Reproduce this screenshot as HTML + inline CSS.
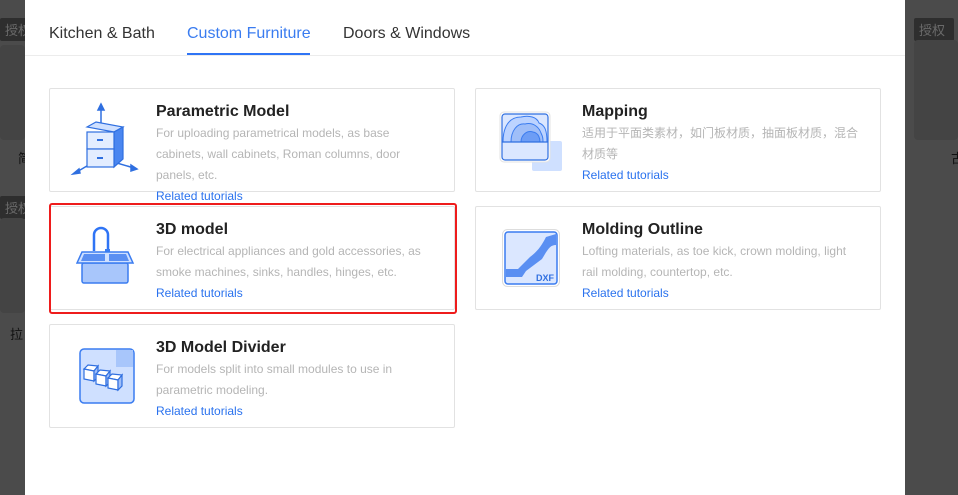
<!DOCTYPE html>
<html><head><meta charset="utf-8">
<style>
*{margin:0;padding:0;box-sizing:border-box}
body{width:958px;height:495px;overflow:hidden;background:#4b4b4b;font-family:"Liberation Sans","Noto Sans CJK SC",sans-serif;position:relative}
.badge{position:absolute;background:#2e2e2e;color:#6a6a6a;font-size:13px;padding:2px 5px;border-radius:2px}
.ph{position:absolute;background:#444;border-radius:4px}
.modal{position:absolute;left:25px;top:0;width:880px;height:495px;background:#fff}
.tabs{position:absolute;left:0;top:0;width:880px;height:56px;border-bottom:1px solid #ececec}
.tab{position:absolute;top:25px;font-size:16px;color:#333}
.tab.on{color:#3a7cf0}
.ul{position:absolute;left:162px;top:53px;width:123px;height:2px;background:#2f74f5}
.card{position:absolute;width:406px;height:104px;border:1px solid #e2e2e2;border-radius:2px;background:#fff}
.card h3{position:absolute;left:106px;top:14px;font-size:16px;font-weight:bold;color:#222}
.card p{position:absolute;left:106px;top:34px;width:272px;font-size:12px;line-height:21px;color:#b5b5b5}
.card a{position:absolute;left:106px;font-size:12px;color:#2a72ee;text-decoration:none}
.card svg{position:absolute}
.red{position:absolute;left:49px;top:203px;width:408px;height:111px;border:2px solid #ee1c1c;border-radius:3px}
</style></head><body>
<div class="badge" style="left:0;top:18px">授权</div>
<div class="ph" style="left:0;top:45px;width:25px;height:95px"></div>
<div style="position:absolute;left:18px;top:148px;font-size:13px;color:#111">简</div>
<div class="badge" style="left:0;top:196px">授权</div>
<div class="ph" style="left:0;top:218px;width:25px;height:95px"></div>
<div style="position:absolute;left:10px;top:324px;font-size:13px;color:#111">拉</div>
<div class="badge" style="left:914px;top:18px;width:40px">授权</div>
<div class="ph" style="left:914px;top:40px;width:44px;height:100px"></div>
<div style="position:absolute;left:951px;top:148px;font-size:13px;color:#111">古</div>

<div class="modal">
 <div class="tabs">
  <div class="tab" style="left:24px">Kitchen &amp; Bath</div>
  <div class="tab on" style="left:162px">Custom Furniture</div>
  <div class="tab" style="left:318px">Doors &amp; Windows</div>
  <div class="ul"></div>
 </div>
</div>

<div class="card" style="left:49px;top:88px">
 <svg style="left:20px;top:12px" width="70" height="80" viewBox="0 0 70 80">
  <g stroke="#2f6fe0" stroke-width="1.5" fill="none">
   <line x1="31" y1="24" x2="31" y2="6"/><polygon points="31,3 28,9 34,9" fill="#2f6fe0"/>
   <line x1="22" y1="62" x2="5" y2="72"/><polygon points="3,73 9,68 10,72" fill="#2f6fe0"/>
   <line x1="40" y1="60" x2="64" y2="67"/><polygon points="67,68 61,64 61,70" fill="#2f6fe0"/>
  </g>
  <polygon points="17,26 26,21 53,26 44,31" fill="#cfe0ff" stroke="#2f6fe0" stroke-width="1.2"/>
  <polygon points="44,31 53,26 53,58 44,66" fill="#4a86f0" stroke="#2f6fe0" stroke-width="1.2"/>
  <rect x="17" y="31" width="27" height="17" fill="#e3edff" stroke="#2f6fe0" stroke-width="1.2"/>
  <rect x="17" y="48" width="27" height="18" fill="#e3edff" stroke="#2f6fe0" stroke-width="1.2"/>
  <rect x="27" y="38" width="6" height="2" fill="#2f6fe0"/><rect x="27" y="56" width="6" height="2" fill="#2f6fe0"/>
 </svg>
 <h3>Parametric Model</h3>
 <p>For uploading parametrical models, as base cabinets, wall cabinets, Roman columns, door panels, etc.</p>
 <a style="top:100px">Related tutorials</a>
</div>

<div class="card" style="left:475px;top:88px">
 <svg style="left:23px;top:20px" width="65" height="62" viewBox="0 0 65 62">
  <rect x="33" y="32" width="30" height="30" rx="2" fill="#cfe0ff"/>
  <rect x="1" y="3" width="50" height="50" rx="4" fill="#fff" stroke="#e3e3e3"/>
  <rect x="3" y="5" width="46" height="46" rx="3" fill="#dbe7ff" stroke="#2f6fe0" stroke-width="1.2"/>
  <path d="M4 33 C4 18 10 8 22 8 C30 6 38 8 40 14 C46 16 48 22 48 33 Z" fill="#bcd3ff" stroke="#3a7cf0"/>
  <path d="M12 33 C12 22 18 14 26 15 C34 13 40 18 42 24 C44 28 44 30 44 33 Z" fill="#9fbef8" stroke="#3a7cf0"/>
  <path d="M22 33 C22 26 28 21 34 23 C40 24 41 30 41 33 Z" fill="#6d9df5" stroke="#3a7cf0"/>
  <line x1="3" y1="33" x2="49" y2="33" stroke="#2f6fe0" stroke-width="1.2"/>
 </svg>
 <h3>Mapping</h3>
 <p style="width:280px">适用于平面类素材，如门板材质，抽面板材质，混合材质等</p>
 <a style="top:79px">Related tutorials</a>
</div>

<div class="card" style="left:49px;top:206px">
 <svg style="left:26px;top:14px" width="62" height="70" viewBox="0 0 62 70">
  <path d="M18 30 V14 A7 7 0 0 1 32 14 V30" fill="none" stroke="#2f74f5" stroke-width="2.5"/>
  <rect x="29" y="28" width="5" height="7" fill="#3a7cf0"/>
  <rect x="6" y="42" width="46" height="20" rx="2" fill="#a8c6fb" stroke="#3a7cf0" stroke-width="1.5"/>
  <polygon points="1,42 6,31 52,31 57,42" fill="#cfe0ff" stroke="#3a7cf0" stroke-width="1.5"/>
  <polygon points="5,40 8,33 29,33 29,40" fill="#5a8ff2"/><polygon points="33,40 33,33 50,33 53,40" fill="#5a8ff2"/>
 </svg>
 <h3>3D model</h3>
 <p>For electrical appliances and gold accessories, as smoke machines, sinks, handles, hinges, etc.</p>
 <a style="top:79px">Related tutorials</a>
</div>

<div class="card" style="left:475px;top:206px">
 <svg style="left:26px;top:22px" width="58" height="58" viewBox="0 0 58 58">
  <rect x="0.5" y="0.5" width="57" height="57" rx="5" fill="#fff" stroke="#ddd"/>
  <rect x="3" y="3" width="52" height="52" rx="3" fill="#dbe7ff" stroke="#3a7cf0" stroke-width="1.5"/>
  <path d="M4 40 L16 40 L28 28 C36 22 40 16 44 8 L54 5 L54 16 C48 16 46 20 40 30 L24 42 L20 48 L4 48 Z" fill="#5a8ff2"/>
  <text x="52" y="52" text-anchor="end" font-size="9" font-weight="bold" fill="#2f6fe0" font-family="Liberation Sans">DXF</text>
 </svg>
 <h3>Molding Outline</h3>
 <p>Lofting materials, as toe kick, crown molding, light rail molding, countertop, etc.</p>
 <a style="top:79px">Related tutorials</a>
</div>

<div class="card" style="left:49px;top:324px">
 <svg style="left:28px;top:22px" width="58" height="58" viewBox="0 0 58 58">
  <rect x="2" y="2" width="54" height="54" rx="4" fill="#cfe0ff" stroke="#3a7cf0" stroke-width="1.5"/>
  <rect x="38" y="3" width="17" height="17" fill="#a8c6fb"/>
  <g fill="#fff" stroke="#2f6fe0" stroke-width="1.2">
   <polygon points="6,22 10,18 20,19 16,24"/><polygon points="6,22 16,24 16,34 6,32"/><polygon points="16,24 20,19 20,30 16,34" fill="#9fbef8"/>
   <polygon points="18,27 22,23 32,24 28,29"/><polygon points="18,27 28,29 28,39 18,37"/><polygon points="28,29 32,24 32,35 28,39" fill="#9fbef8"/>
   <polygon points="30,31 34,27 44,28 40,33"/><polygon points="30,31 40,33 40,43 30,41"/><polygon points="40,33 44,28 44,39 40,43" fill="#9fbef8"/>
  </g>
 </svg>
 <h3>3D Model Divider</h3>
 <p>For models split into small modules to use in parametric modeling.</p>
 <a style="top:79px">Related tutorials</a>
</div>

<div class="red"></div>
</body></html>
